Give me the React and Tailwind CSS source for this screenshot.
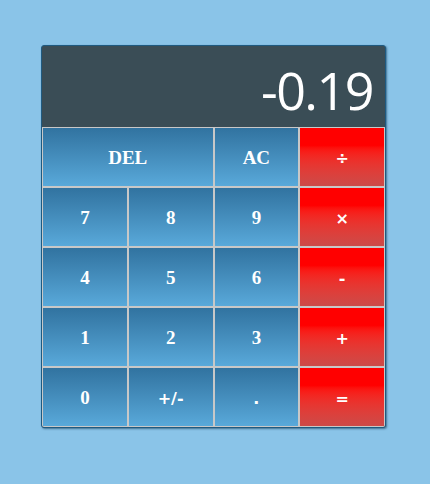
import React, { useState } from 'react';

const keys = [
    { label: 'DEL', span: true },
    { label: 'AC' },
    { label: '÷', op: true },
    { label: '7' }, { label: '8' }, { label: '9' }, { label: '×', op: true },
    { label: '4' }, { label: '5' }, { label: '6' }, { label: '-', op: true },
    { label: '1' }, { label: '2' }, { label: '3' }, { label: '+', op: true },
    { label: '0' }, { label: '+/-', sans: true }, { label: '.', sans: true }, { label: '=', op: true },
];

const Key = ({ k }) => {
    const base = 'h-[60px] flex items-center justify-center border border-[#c8c8c8] text-white font-bold select-none';
    const color = k.op
        ? 'bg-linear-to-b from-[#ff0000] from-30% to-[#cc4a48]'
        : 'bg-linear-to-b from-[#3173a0] to-[#59a9da]';
    const font = k.op || k.sans
        ? "text-[16px] font-['DejaVu_Sans',sans-serif]"
        : 'text-[19px]';
    return (
        <button className={`${base} ${color} ${font} ${k.span ? 'col-span-2' : ''}`}>
            <span className="pt-[3px]">{k.label}</span>
        </button>
    );
};

export default function App() {
    const [display] = useState('-0.19');

    return (
        <div className="w-[430px] h-[484px] bg-[#8ac4e8] pt-[45px] pl-[41px] font-['Liberation_Serif',serif]">
            <div className="w-[345px] border border-[#1f5a80] rounded-[3px] bg-[#3a4d56] shadow-[1px_1px_2px_rgba(20,60,90,0.6)] overflow-hidden">
                <div className="h-[81px] flex items-center justify-end pr-[12px] pt-[6px] text-white text-[52px] font-normal tracking-[-1.5px] font-['Open_Sans',sans-serif]">
                    {display}
                </div>
                <div className="grid grid-cols-4">
                    {keys.map(k => <Key key={k.label} k={k} />)}
                </div>
            </div>
        </div>
    );
}
